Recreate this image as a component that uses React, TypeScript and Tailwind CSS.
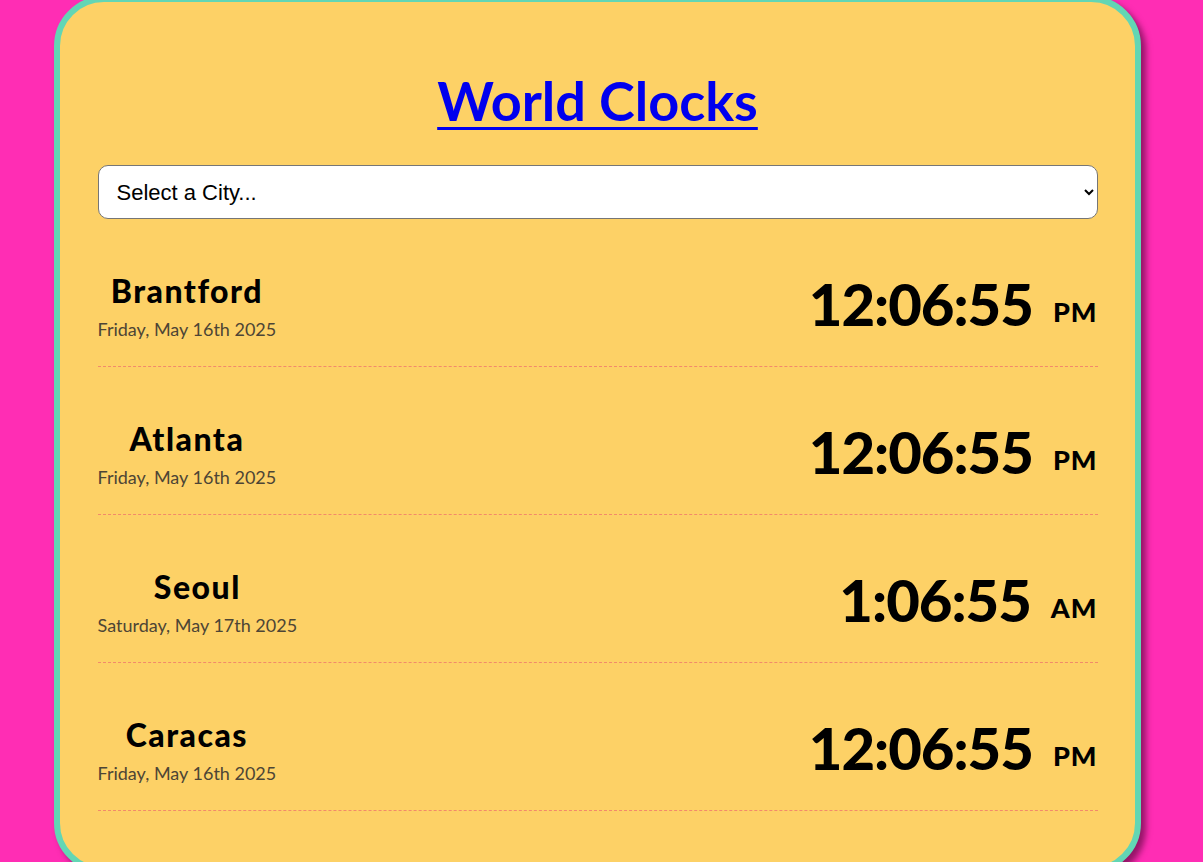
const CITIES = [
  { name: "Brantford", date: "Friday, May 16th 2025", time: "12:06:55", ampm: "PM" },
  { name: "Atlanta", date: "Friday, May 16th 2025", time: "12:06:55", ampm: "PM" },
  { name: "Seoul", date: "Saturday, May 17th 2025", time: "1:06:55", ampm: "AM" },
  { name: "Caracas", date: "Friday, May 16th 2025", time: "12:06:55", ampm: "PM" },
];

export default function App() {
  return (
    <div className="min-h-screen bg-[#ff2db4] font-['Lato',_'Open_Sans',_sans-serif]">
      <div className="-mt-1 ml-[54px] w-[1087px] rounded-[50px] border-[6px] border-[#62d6b4] bg-[#fdd166] pt-[66px] pb-[56px] shadow-[5px_5px_6px_rgba(60,0,40,0.55)]">
        <h1 className="mb-[32px] text-center text-[54px] leading-[65px] font-bold">
          <a href="#" className="text-[#0000ee] underline decoration-[3px] underline-offset-[6px]">
            World Clocks
          </a>
        </h1>
        <div className="mx-auto w-[1000px]">
          <select className="h-[54px] w-full rounded-[10px] border border-[#767676] bg-white px-[14px] font-['Liberation_Sans',_Arial,_sans-serif] text-[22px] text-black">
            <option>Select a City...</option>
            <option>Tokyo</option>
            <option>Paris</option>
            <option>Sydney</option>
          </select>
          {CITIES.map(({ name, date, time, ampm }) => (
            <div
              key={name}
              className="flex h-[148px] items-center justify-between border-b border-dashed border-[#f28a6a] pt-[28px]"
            >
              <div className="text-center">
                <div className="text-[32px] leading-[36px] font-black tracking-[1.5px] text-black">{name}</div>
                <div className="mt-[9px] text-[18px] leading-[22px] text-[#4d4535]">{date}</div>
              </div>
              <div className="mb-[6px] text-black">
                <span className="text-[58px] leading-[58px] font-black tracking-[-1px]">{time}</span>
                <span className="ml-[20px] align-[4px] text-[27px] font-black tracking-[1px]">{ampm}</span>
              </div>
            </div>
          ))}
        </div>
      </div>
    </div>
  );
}
